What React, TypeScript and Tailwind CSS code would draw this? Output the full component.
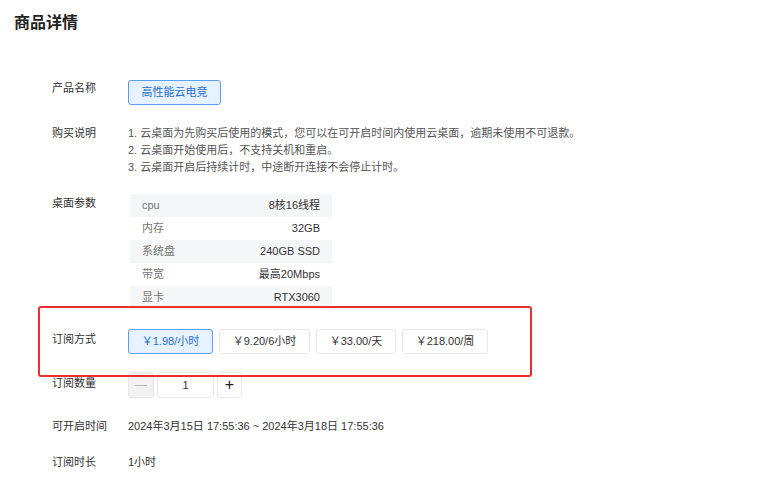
import React from 'react';

const specs = [
    { k: 'cpu', v: '8核16线程' },
    { k: '内存', v: '32GB' },
    { k: '系统盘', v: '240GB SSD' },
    { k: '带宽', v: '最高20Mbps' },
    { k: '显卡', v: 'RTX3060' },
];

const plans = [
    { label: '￥1.98/小时', w: 'w-[85px]' },
    { label: '￥9.20/6小时', w: 'w-[91px]' },
    { label: '￥33.00/天', w: 'w-[80px]' },
    { label: '￥218.00/周', w: 'w-[86px]' },
];

function Label({ children, className = '' }: { children: React.ReactNode; className?: string }) {
    return <div className={`w-[76px] shrink-0 text-[11px] leading-[16px] text-[#333] ${className}`}>{children}</div>;
}

export default function App() {
    return (
        <div
            className="relative w-[765px] h-[500px] bg-white overflow-hidden"
            style={{ fontFamily: '"Liberation Sans", "Noto Sans CJK SC", sans-serif' }}
        >
            <h1 className="pl-[14px] pt-[12px] text-[16px] leading-[22px] font-bold text-[#222]">商品详情</h1>

            <div className="pl-[52px]">
                {/* 产品名称 */}
                <div className="flex items-start mt-[46px]">
                    <Label>产品名称</Label>
                    <button className="w-[93px] h-[25px] whitespace-nowrap text-[11px] rounded-[3px] border border-[#5b9ef5] bg-[#e6f2ff] text-[#1f6fd6]">
                        高性能云电竞
                    </button>
                </div>

                {/* 购买说明 */}
                <div className="flex items-start mt-[20px]">
                    <Label>购买说明</Label>
                    <div className="text-[11px] leading-[17px] text-[#555]">
                        <div>1. 云桌面为先购买后使用的模式，您可以在可开启时间内使用云桌面，逾期未使用不可退款。</div>
                        <div>2. 云桌面开始使用后，不支持关机和重启。</div>
                        <div>3. 云桌面开启后持续计时，中途断开连接不会停止计时。</div>
                    </div>
                </div>

                {/* 桌面参数 */}
                <div className="flex items-start mt-[18px]">
                    <Label className="mt-[1px]">桌面参数</Label>
                    <div className="w-[202px] ml-[2px] text-[11px]">
                        {specs.map((s, i) => (
                            <div
                                key={s.k}
                                className={`flex items-center justify-between h-[23px] px-[12px] ${i % 2 === 0 ? 'bg-[#f5f6f7]' : 'bg-white'}`}
                            >
                                <span className="text-[#777]">{s.k}</span>
                                <span className="text-[#333]">{s.v}</span>
                            </div>
                        ))}
                    </div>
                </div>

                {/* 订阅方式 */}
                <div className="flex items-start mt-[20px]">
                    <Label className="mt-[2px]">订阅方式</Label>
                    <div className="flex gap-[6px]">
                        {plans.map((p, i) => (
                            <button
                                key={p.label}
                                className={`${p.w} h-[25px] whitespace-nowrap text-[11px] rounded-[3px] border ${
                                    i === 0
                                        ? 'border-[#5b9ef5] bg-[#e6f2ff] text-[#1f6fd6]'
                                        : 'border-[#e8e8e8] bg-white text-[#333]'
                                }`}
                            >
                                {p.label}
                            </button>
                        ))}
                    </div>
                </div>

                {/* 订阅数量 */}
                <div className="flex items-start mt-[18px]">
                    <Label className="mt-[3px]">订阅数量</Label>
                    <div className="flex items-center gap-[3px]">
                        <div className="w-[26px] h-[26px] flex items-center justify-center rounded-[3px] border border-[#e8e8e8] bg-[#f2f2f2] text-[#bbb] text-[12px]">
                            —
                        </div>
                        <div className="w-[57px] h-[26px] flex items-center justify-center rounded-[3px] border border-[#e8e8e8] bg-white text-[11px] text-[#333]">
                            1
                        </div>
                        <div className="w-[25px] h-[26px] flex items-center justify-center rounded-[3px] border border-[#e8e8e8] bg-white text-[16px] text-[#222] font-medium">
                            +
                        </div>
                    </div>
                </div>

                {/* 可开启时间 */}
                <div className="flex items-start mt-[20px]">
                    <Label>可开启时间</Label>
                    <div className="text-[11px] leading-[16px] text-[#333]">
                        2024年3月15日 17:55:36 ~ 2024年3月18日 17:55:36
                    </div>
                </div>

                {/* 订阅时长 */}
                <div className="flex items-start mt-[20px]">
                    <Label>订阅时长</Label>
                    <div className="text-[11px] leading-[16px] text-[#333]">1小时</div>
                </div>
            </div>

            {/* annotation */}
            <div className="absolute left-[38px] top-[306px] w-[494px] h-[71px] border-[2.5px] border-[#e8302f] rounded-[3px] pointer-events-none" />
        </div>
    );
}
